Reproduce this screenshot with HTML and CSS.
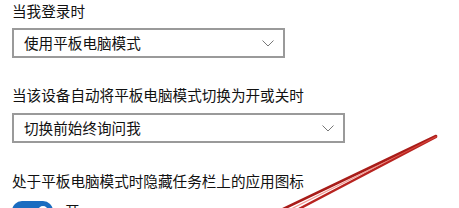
FILE: index.html
```html
<!DOCTYPE html>
<html lang="zh-CN">
<head>
<meta charset="utf-8">
<link rel="stylesheet" href="styles.css">
</head>
<body>
<div class="page">
  <div class="label first">当我登录时</div>
  <div class="select w1">
    <span class="value">使用平板电脑模式</span>
    <svg class="chev" width="12" height="7" viewBox="0 0 12 7"><path d="M0.5 0.5 L6 6 L11.5 0.5" fill="none" stroke="#777" stroke-width="1"/></svg>
  </div>
  <div class="label">当该设备自动将平板电脑模式切换为开或关时</div>
  <div class="select w2">
    <span class="value">切换前始终询问我</span>
    <svg class="chev" width="12" height="7" viewBox="0 0 12 7"><path d="M0.5 0.5 L6 6 L11.5 0.5" fill="none" stroke="#777" stroke-width="1"/></svg>
  </div>
  <div class="label third">处于平板电脑模式时隐藏任务栏上的应用图标</div>
  <div class="toggle-row">
    <div class="toggle"><span class="knob"></span></div>
    <span class="state">开</span>
  </div>
</div>
<svg class="annot" width="459" height="208" viewBox="0 0 459 208">
  <path d="M436 136 L281 210" stroke="#a81c18" stroke-width="2.6" stroke-linecap="round" fill="none"/>
  <path d="M436 137 L297 210" stroke="#b82420" stroke-width="2.4" stroke-linecap="round" fill="none"/>
  <path d="M436.5 136.5 L289 210" stroke="#e8584c" stroke-width="1.2" fill="none" opacity="0.6"/>
</svg>
</body>
</html>
```
FILE: styles.css
```css
html, body {
  margin: 0;
  padding: 0;
  background: #ffffff;
  width: 459px;
  height: 208px;
  overflow: hidden;
}
body {
  position: relative;
  font-family: "Noto Sans CJK SC", "Microsoft YaHei", sans-serif;
  color: #111111;
}
.page {
  padding: 1px 0 0 12px;
}
.label {
  font-size: 14.6px;
  line-height: 20px;
  height: 20px;
  white-space: nowrap;
  margin-top: 27px;
  margin-bottom: 8px;
}
.label.first {
  margin-top: 0;
  margin-bottom: 7px;
}
.label.third {
  margin-top: 28px;
  margin-bottom: 10px;
}
.select {
  box-sizing: border-box;
  height: 30px;
  border: 2px solid #9a9a9a;
  display: flex;
  align-items: center;
  justify-content: space-between;
  padding: 0 9px 0 10px;
}
.select.w1 { width: 273px; }
.select.w2 { width: 333px; }
.value {
  font-size: 14.6px;
  line-height: 20px;
  white-space: nowrap;
}
.chev {
  display: block;
}
.toggle-row {
  display: flex;
  align-items: flex-start;
  gap: 12px;
  height: 20px;
}
.toggle {
  width: 41px;
  height: 20px;
  border-radius: 10px;
  background: #1a6cc0;
  position: relative;
}
.knob {
  position: absolute;
  right: 5px;
  top: 5px;
  width: 10px;
  height: 10px;
  border-radius: 50%;
  background: #fff;
}
.state {
  font-size: 14.6px;
  line-height: 20px;
}
.annot {
  position: absolute;
  left: 0;
  top: 0;
  pointer-events: none;
}
```
